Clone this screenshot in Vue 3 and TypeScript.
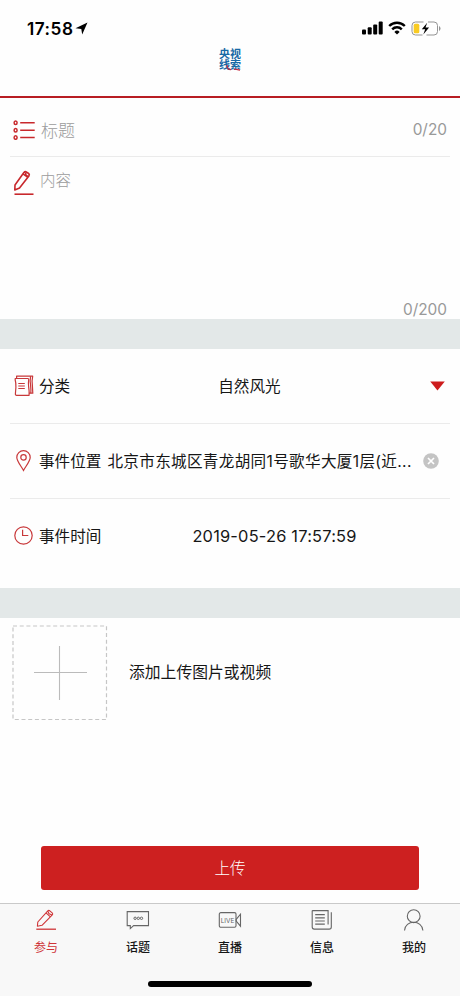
<script setup lang="ts">
import { ref } from 'vue'

type TabKey = 'join' | 'topic' | 'live' | 'news' | 'me'

interface Tab {
  key: TabKey
  label: string
}

const tabs: Tab[] = [
  { key: 'join', label: '参与' },
  { key: 'topic', label: '话题' },
  { key: 'live', label: '直播' },
  { key: 'news', label: '信息' },
  { key: 'me', label: '我的' },
]

const active = ref<TabKey>('join')
const category = ref('自然风光')
const address = ref('北京市东城区青龙胡同1号歌华大厦1层(近...')
const time = ref('2019-05-26 17:57:59')
</script>

<template>
  <div class="screen">
    <header class="header">
      <div class="status">
        <span class="clock">17:58</span>
        <svg class="arrow" width="13" height="13" viewBox="0 0 13 13"><path d="M12.500.500 7.200 12.400 6.300 6.900.500 6.200Z" fill="#000" /></svg>
        <span class="spacer"></span>
        <svg class="signal" width="21" height="14" viewBox="0 0 21 14">
          <rect x="0" y="8.500" width="4" height="5" rx="1" />
          <rect x="5.700" y="6.300" width="4" height="7.200" rx="1" />
          <rect x="11.200" y="3.500" width="4" height="10" rx="1" />
          <rect x="16.700" y=".500" width="4" height="13" rx="1" />
        </svg>
        <svg class="wifi" width="18" height="14" viewBox="0 0 18 14">
          <path d="M1.200 5A11.100 11.100 0 0 1 16.800 5M4.200 8.300a6.800 6.800 0 0 1 9.600 0" fill="none" stroke="#000" stroke-width="2.400" />
          <path d="M9 13.600 6.400 10.900a3.700 3.700 0 0 1 5.200 0Z" fill="#000" />
        </svg>
        <svg class="battery" width="30" height="15" viewBox="0 0 30 15">
          <path d="M12.500 1H4.500Q1 1 1 4.500v6Q1 14 4.500 14h7M17 1h6q3.500 0 3.500 3.500v6Q26.500 14 23 14h-7.500" fill="none" stroke="#939393" />
          <path d="M28 5v5q1.500-.8 1.500-2.500T28 5Z" fill="#939393" />
          <rect x="2.700" y="2.700" width="5.600" height="9.600" rx="1.500" fill="#f9cb22" />
          <path d="m16.200 1.700-5.400 6.500h3.400l-1.900 5.300 5.800-6.900h-3.600Z" fill="#000" />
        </svg>
      </div>
      <div class="logo">
        央视线索
        <svg class="swoosh" width="22" height="6" viewBox="0 0 22 6"><path d="M8 0q0 4.500 4 4.700M15 4l6 1.200" fill="none" stroke="#c8283c" stroke-width="1.200" /></svg>
      </div>
    </header>

    <section class="compose">
      <div class="title-row">
        <svg class="lead" width="23" height="20" viewBox="0 0 23 20" fill="none" stroke="#c8282c" stroke-width="1.500">
          <ellipse cx="2.600" cy="2.800" rx="1.500" ry="1.800" /><ellipse cx="2.600" cy="10.200" rx="1.500" ry="1.800" /><ellipse cx="2.600" cy="17.500" rx="1.500" ry="1.800" />
          <path d="M7.200 2.800h14.500M7.200 10.200h14.500M7.200 17.500h14.500" />
        </svg>
        <span class="hint title-hint">标题</span>
        <span class="spacer"></span>
        <span class="count">0/20</span>
      </div>
      <div class="content-row">
        <svg class="pen" width="22" height="26" viewBox="0 0 22 26" fill="none" stroke="#c8282c" stroke-width="1.600" stroke-linejoin="round">
          <path d="M1.800 20 2 15 10.900 2.500q1.200-1.400 2.700-.4l2 1.400q1.300 1 .3 2.500L6.500 18ZM10 3.900l4.900 3.500M12.600 2.600l.4 2.800 2.600 1" />
          <path d="M1.500 24.200h19" />
        </svg>
        <span class="hint">内容</span>
      </div>
      <div class="count content-count">0/200</div>
    </section>

    <div class="band"></div>

    <section class="details">
      <div class="row">
        <svg class="icon" width="22" height="22" viewBox="0 0 22 22" fill="none" stroke="#c8383a" stroke-width="1.200" stroke-linejoin="round">
          <path d="M3.200 3.500h11.500q1.200 0 1 1.300-.6 3.500 0 7.500.7 4 .4 8H3.600q-1.300 0-1.200-1.500l.5-6.500Q3.100 8 2.200 5V3.500ZM3.600 3.500V1.200H19.700q-1.100 5-.3 9.500l.4 7.500h-3.500" />
          <path d="M17.600 1.200q-.9 5 0 9.500.5 4 .2 7.500M5.300 8.500h6.500M5.300 11h6.500M5.300 13.500h6.500" />
        </svg>
        <span class="label">分类</span>
        <span class="value category">{{ category }}</span>
        <svg class="caret" width="15" height="10" viewBox="0 0 15 10"><path d="M.200.400h14.600L7.500 9.600Z" fill="#cd1c1d" /></svg>
      </div>
      <div class="row">
        <svg class="icon" width="22" height="22" viewBox="0 0 22 22" fill="none" stroke="#c8383a" stroke-width="1.200">
          <path d="M10.500 20.400C8.500 16.600 3.800 11.100 3.800 7.400a6.700 6.700 0 0 1 13.400 0c0 3.700-4.700 9.200-6.700 13Z" />
          <circle cx="10.500" cy="7.400" r="2.700" />
        </svg>
        <span class="label">事件位置</span>
        <span class="address">{{ address }}</span>
        <svg class="clear" width="16" height="16" viewBox="0 0 16 16">
          <circle cx="8" cy="8" r="7.800" fill="#c4c4c4" />
          <path d="m5 5 6 6M11 5l-6 6" stroke="#fff" stroke-width="1.700" />
        </svg>
      </div>
      <div class="row last">
        <svg class="icon" width="22" height="22" viewBox="0 0 22 22" fill="none" stroke="#c8383a" stroke-width="1.200">
          <circle cx="10.500" cy="10.500" r="8.700" />
          <path d="M9.600 4.700v5.800h5.700" />
        </svg>
        <span class="label">事件时间</span>
        <span class="value time">{{ time }}</span>
      </div>
    </section>

    <div class="band"></div>

    <section class="media">
      <svg width="96" height="96" viewBox="0 0 96 96" fill="none" stroke="#c6c6c6">
        <rect x="1" y="1" width="93.500" height="93.500" stroke-width="1.200" stroke-dasharray="4 2.700" />
        <path d="M22 47.500h53M47.500 21v54" stroke="#bbb" stroke-width="1.100" />
      </svg>
      <span class="media-text">添加上传图片或视频</span>
    </section>

    <button class="submit" type="button">上传</button>

    <footer class="footer">
      <nav class="tabs">
        <div v-for="tab in tabs" :key="tab.key" class="tab" :class="{ active: active === tab.key }" @click="active = tab.key">
          <svg width="26" height="24" viewBox="0 0 26 24" fill="none" stroke="currentColor" stroke-width="1.100">
            <template v-if="tab.key === 'join'">
              <path d="M4.400 18.200 4.800 14 14.800 2.900q.9-1 2-.1l2.400 2.100q1 1 .1 2L9 17.300ZM13 4.900l4.400 4M14.800 2.900l1.200 2.800 3.100 1.200" stroke-linejoin="round" />
              <path d="M3.300 21.200H23" stroke-width="1.300" />
            </template>
            <template v-else-if="tab.key === 'topic'">
              <path d="M2.200 3.600h21.300v14H8.600l-3.300 3v-3H2.200Z" />
              <g stroke-width="1"><circle cx="10.100" cy="10.300" r="1.200" /><circle cx="13.300" cy="10.300" r="1.200" /><circle cx="16.500" cy="10.300" r="1.200" /></g>
            </template>
            <template v-else-if="tab.key === 'live'">
              <rect x="2.300" y="4.600" width="16.700" height="14.600" rx="1.500" />
              <path d="m19.200 11.300 4.300-5.100v12l-4.300-5.100Z" />
              <text x="3.700" y="14.700" class="live-text">LIVE</text>
            </template>
            <template v-else-if="tab.key === 'news'">
              <path d="M3.200 2.600h15.900v13.900M3.200 2.600v16.500q0 2 2 2h14.900q2.200 0 2.200-2.200V4.200" />
              <path d="M6.200 6.600h9.600M6.200 9.800h9.600M6.200 13h9.600M6.200 16.200h9.600" stroke-width="1.200" />
            </template>
            <template v-else>
              <circle cx="12.700" cy="8.200" r="6.400" />
              <path d="M3.500 22.500c.500-11 17.800-11 18.400 0" />
            </template>
          </svg>
          <span>{{ tab.label }}</span>
        </div>
      </nav>
      <div class="home"></div>
    </footer>
  </div>
</template>

<style>
body { background: #fff; }
</style>

<style scoped>
.screen {
  box-sizing: border-box;
  width: 460px;
  height: 996px;
  display: flex;
  flex-direction: column;
  overflow: hidden;
  background: #fefefe;
  color: #161616;
  font-family: Inter, "Noto Sans CJK SC", sans-serif;
  font-size: 15.6px;
}
svg { flex: none; display: block; }
.spacer { flex: 1; }
.header {
  box-sizing: border-box;
  height: 98px;
  border-bottom: 2px solid #b81d23;
  display: flex;
  flex-direction: column;
  align-items: center;
}
.status {
  box-sizing: border-box;
  width: 100%;
  height: 48px;
  padding: 8px 19px 0 27px;
  display: flex;
  align-items: center;
}
.clock { font-size: 17.2px; font-weight: 600; letter-spacing: .5px; color: #000; }
.arrow { margin-left: 2px; }
.wifi { margin-left: 5px; }
.battery { margin-left: 5px; }
.logo {
  position: relative;
  width: 22px;
  color: #1769a5;
  font-family: "Noto Sans CJK SC", sans-serif;
  font-size: 11px;
  font-weight: 700;
  line-height: 11px;
  word-break: break-all;
}
.swoosh { position: absolute; left: 0; bottom: -1px; }
.compose {
  height: 221px;
  display: flex;
  flex-direction: column;
}
.title-row {
  box-sizing: border-box;
  height: 59px;
  margin: 0 10px;
  padding: 5px 3px 0 3px;
  border-bottom: 1px solid #ebebeb;
  display: flex;
  align-items: center;
}
.hint { color: #9b9b9b; font-weight: 300; font-size: 15.5px; }
.title-hint { font-size: 17px; margin-left: 5px; }
.count { color: #999; font-size: 15.4px; line-height: 18px; font-weight: 400; }
.content-row {
  flex: 1;
  padding: 13px 13px 0;
  display: flex;
  align-items: flex-start;
  gap: 5px;
}
.content-row .hint { line-height: 22px; }
.content-count { align-self: flex-end; margin-right: 13px; }
.band { height: 30px; background: #e3e8e8; }
.details { height: 239px; }
.row {
  box-sizing: border-box;
  height: 75px;
  margin: 0 10px;
  padding-left: 3px;
  border-bottom: 1px solid #ebebeb;
  display: flex;
  align-items: center;
}
.row.last { height: 73px; border: 0; }
.label { margin: -2px 0 0 4px; white-space: nowrap; flex: none; }
.value { flex: 1; text-align: center; }
.category { margin-top: -2px; padding-left: 0; }
.time { margin: 0 0 0 0; padding-right: 2px; font-size: 16.4px; letter-spacing: .2px; }
.row.last .time { padding-right: 2px; flex: none; margin-left: 91px; }
.row .category { flex: none; margin-left: 148px; }
.caret { margin: 0 5px 0 auto; }
.address { flex: 1; margin: -2px 0 0 6px; white-space: nowrap; letter-spacing: .32px; }
.clear { margin-right: 11px; }
.media {
  height: 228px;
  box-sizing: border-box;
  padding: 7px 0 0 12px;
  display: flex;
  align-items: flex-start;
  gap: 21px;
}
.media-text { line-height: 96px; font-size: 15.8px; }
.submit {
  flex: none;
  width: 378px;
  height: 44px;
  margin: 0 auto;
  padding: 0 0 2px;
  border: 0;
  border-radius: 3px;
  background: #cd2020;
  color: #fff;
  font: inherit;
  font-weight: 300;
}
.footer {
  box-sizing: border-box;
  height: 93px;
  margin-top: 13px;
  border-top: 1px solid #c9c9c9;
  background: #f8f8f8;
  display: flex;
  flex-direction: column;
  justify-content: space-between;
  align-items: center;
}
.tabs { display: flex; width: 100%; }
.tab {
  flex: 1;
  display: flex;
  flex-direction: column;
  align-items: center;
  padding-top: 4px;
  color: #666;
}
.tab span { margin-top: 7px; font-size: 12px; line-height: 18px; color: #161616; font-weight: 500; }
.tab.active { color: #cf3437; }
.tab.active span { color: #cf3437; font-weight: 400; }
.live-text { font-size: 6.400px; font-family: Inter, sans-serif; fill: currentColor; stroke: none; }
.home { width: 164px; height: 6px; margin-bottom: 9px; border-radius: 3px; background: #000; }
</style>
